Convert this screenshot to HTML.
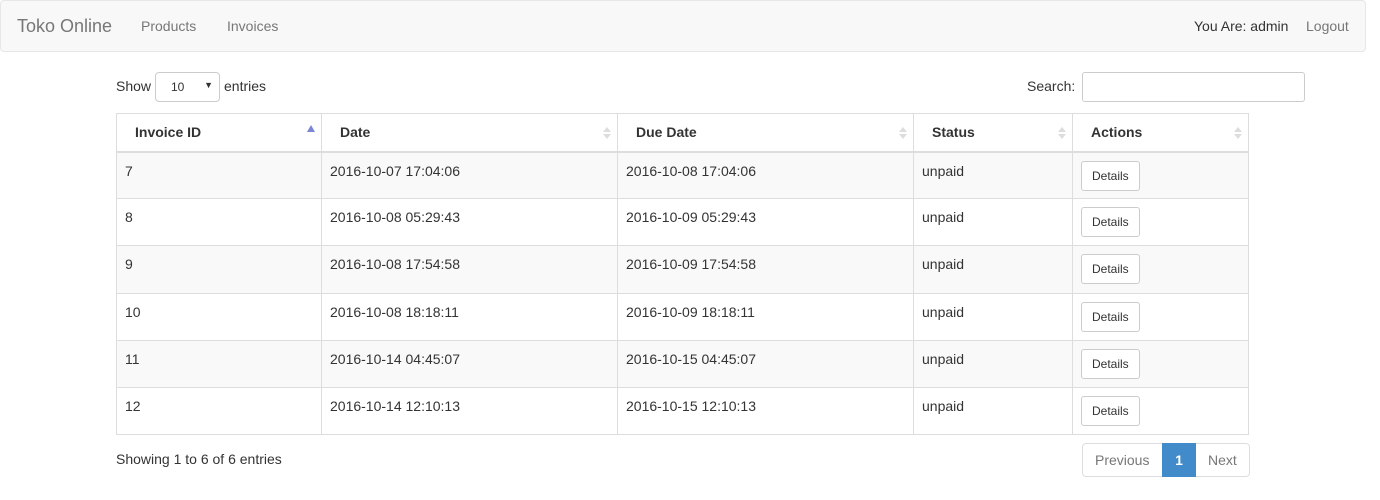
<!DOCTYPE html>
<html><head><style>
*{box-sizing:border-box}
body{margin:0;font-family:"Liberation Sans",Arial,sans-serif;font-size:14px;color:#333;background:#fff;width:1380px;height:500px;overflow:hidden;position:relative}
.nav{position:absolute;left:0;top:0;width:1366px;height:52px;background:#f8f8f8;border:1px solid #e7e7e7;border-radius:4px}
.nav span{position:absolute;top:17px;color:#777}
.a{position:absolute}
table{position:absolute;left:116px;top:113px;width:1133px;border-collapse:collapse;border:1px solid #ddd}
th{height:38px;text-align:left;padding:0 18px;font-weight:bold;border-left:1px solid #ddd;border-bottom:2px solid #ddd;position:relative}
td{height:47.2px;padding:8px 8px 6px;vertical-align:top;border-left:1px solid #ddd;border-top:1px solid #ddd;line-height:20px}
tr:nth-child(even) td{background:#f9f9f9}
.s{position:absolute;right:6px;top:12px;width:0;height:0;border-left:4px solid transparent;border-right:4px solid transparent}
.btn{display:inline-block;border:1px solid #ccc;border-radius:3px;background:#fff;font-size:12px;height:30px;line-height:28px;padding:0 10px;margin-top:0}
</style></head><body>
<div class="nav">
<span style="left:16px;top:15px;font-size:18px">Toko Online</span>
<span style="left:140px">Products</span>
<span style="left:226px">Invoices</span>
<span style="left:1193px;color:#333">You Are: admin</span>
<span style="left:1305px">Logout</span>
</div>
<div class="a" style="left:116px;top:78px">Show</div>
<div class="a" style="left:155px;top:72px;width:65px;height:30px;border:1px solid #ccc;border-radius:4px;font-size:12px;padding:7px 0 0 15px">10<span style="position:absolute;right:6px;top:7px;font-size:9px">▼</span></div>
<div class="a" style="left:224px;top:78px">entries</div>
<div class="a" style="left:1027px;top:78px">Search:</div>
<div class="a" style="left:1082px;top:72px;width:223px;height:30px;border:1px solid #ccc;border-radius:3px"></div>
<table>
<tr><th style="width:205px">Invoice ID<i class="s" style="border-bottom:7px solid #7b86d4;top:11px"></i></th><th style="width:296px">Date<i class="s" style="border-bottom:5px solid #ddd;top:13px"></i><i class="s" style="border-top:5px solid #ddd;top:20px"></i></th><th style="width:296px">Due Date<i class="s" style="border-bottom:5px solid #ddd;top:13px"></i><i class="s" style="border-top:5px solid #ddd;top:20px"></i></th><th style="width:159px">Status<i class="s" style="border-bottom:5px solid #ddd;top:13px"></i><i class="s" style="border-top:5px solid #ddd;top:20px"></i></th><th>Actions<i class="s" style="border-bottom:5px solid #ddd;top:13px"></i><i class="s" style="border-top:5px solid #ddd;top:20px"></i></th></tr>
<tr><td>7</td><td>2016-10-07 17:04:06</td><td>2016-10-08 17:04:06</td><td>unpaid</td><td><span class="btn">Details</span></td></tr>
<tr><td>8</td><td>2016-10-08 05:29:43</td><td>2016-10-09 05:29:43</td><td>unpaid</td><td><span class="btn">Details</span></td></tr>
<tr><td>9</td><td>2016-10-08 17:54:58</td><td>2016-10-09 17:54:58</td><td>unpaid</td><td><span class="btn">Details</span></td></tr>
<tr><td>10</td><td>2016-10-08 18:18:11</td><td>2016-10-09 18:18:11</td><td>unpaid</td><td><span class="btn">Details</span></td></tr>
<tr><td>11</td><td>2016-10-14 04:45:07</td><td>2016-10-15 04:45:07</td><td>unpaid</td><td><span class="btn">Details</span></td></tr>
<tr><td>12</td><td>2016-10-14 12:10:13</td><td>2016-10-15 12:10:13</td><td>unpaid</td><td><span class="btn">Details</span></td></tr>
</table>
<div class="a" style="left:116px;top:451px">Showing 1 to 6 of 6 entries</div>
<div class="a" style="left:1082px;top:443px;width:168px;height:34px;border:1px solid #ddd;border-radius:4px;color:#777;line-height:32px">
<span class="a" style="left:12px">Previous</span>
<span class="a" style="left:79px;top:-1px;width:34px;height:34px;background:#428bca;color:#fff;text-align:center;font-weight:bold;line-height:34px">1</span>
<span class="a" style="left:125px">Next</span>
</div>
</body></html>
